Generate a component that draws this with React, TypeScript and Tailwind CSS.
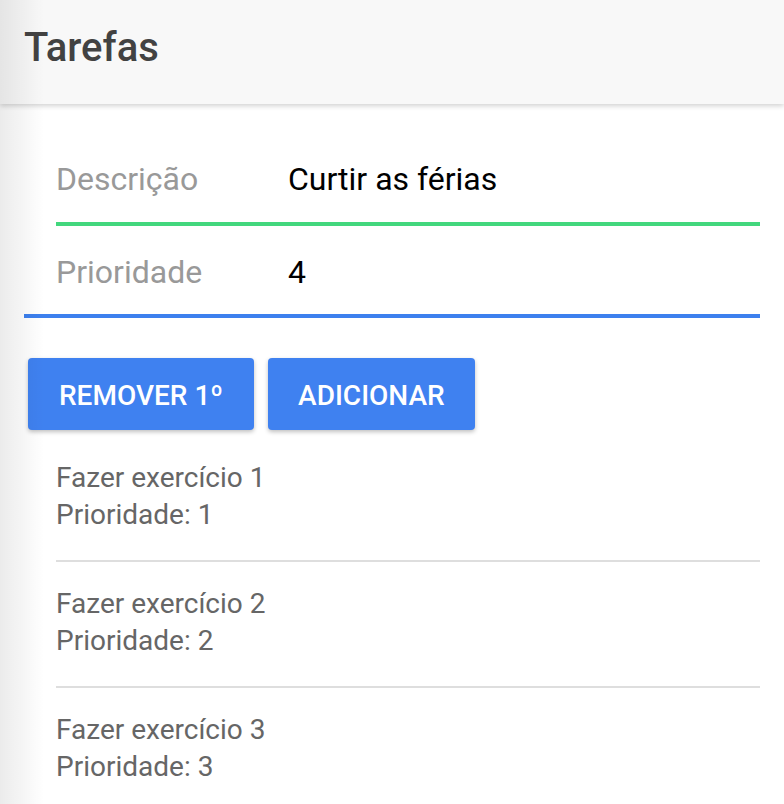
import React from 'react'

const TASKS = [
  { description: 'Fazer exercício 1', priority: 1 },
  { description: 'Fazer exercício 2', priority: 2 },
  { description: 'Fazer exercício 3', priority: 3 }
]

export default function App() {
  return (
    <div className="relative min-h-[804px] w-[784px] overflow-hidden bg-white font-['Roboto','Liberation_Sans',sans-serif]">
      <header className="relative z-10 h-[104px] bg-[#f8f8f8] pl-[24px] pt-[24px] shadow-[0_2px_5px_rgba(0,0,0,0.18)]">
        <h1 className="text-[40px] leading-[48px] font-medium text-[#424242]">Tarefas</h1>
      </header>

      <main className="px-[24px]">
        <div className="ml-[32px] flex items-center border-b-4 border-[#42d77d] pt-[56px] pb-[24px] text-[32px] leading-[38px]">
          <label className="w-[232px] text-[#999999]">Descrição</label>
          <span className="text-black">Curtir as férias</span>
        </div>
        <div className="flex items-center border-b-4 border-[#3d80ee] pl-[32px] pt-[27px] pb-[23px] text-[32px] leading-[38px]">
          <label className="w-[232px] text-[#999999]">Prioridade</label>
          <span className="text-black">4</span>
        </div>

        <div className="ml-[4px] mt-[40px] flex gap-[14px]">
          <button
            type="button"
            className="h-[72px] rounded-[4px] bg-[#3f81f0] px-[31px] pt-[3px] text-[28px] font-medium text-white uppercase shadow-[0_2px_4px_rgba(0,0,0,0.25)]"
          >
            Remover 1º
          </button>
          <button
            type="button"
            className="h-[72px] rounded-[4px] bg-[#3f81f0] px-[30px] pt-[3px] text-[28px] font-medium text-white uppercase shadow-[0_2px_4px_rgba(0,0,0,0.25)]"
          >
            Adicionar
          </button>
        </div>

        <ul className="mt-[6px] pl-[32px]">
          {TASKS.map(task => (
            <li
              key={task.description}
              className="border-b-2 border-[#dedede] pt-[23px] pb-[27px] text-[28px] leading-[37px] text-[#666666]"
            >
              <p>{task.description}</p>
              <p>Prioridade: {task.priority}</p>
            </li>
          ))}
        </ul>
      </main>

      <div className="pointer-events-none absolute inset-y-0 left-0 z-20 w-[44px] bg-gradient-to-r from-[rgba(0,0,0,0.08)] to-transparent" />
    </div>
  )
}
